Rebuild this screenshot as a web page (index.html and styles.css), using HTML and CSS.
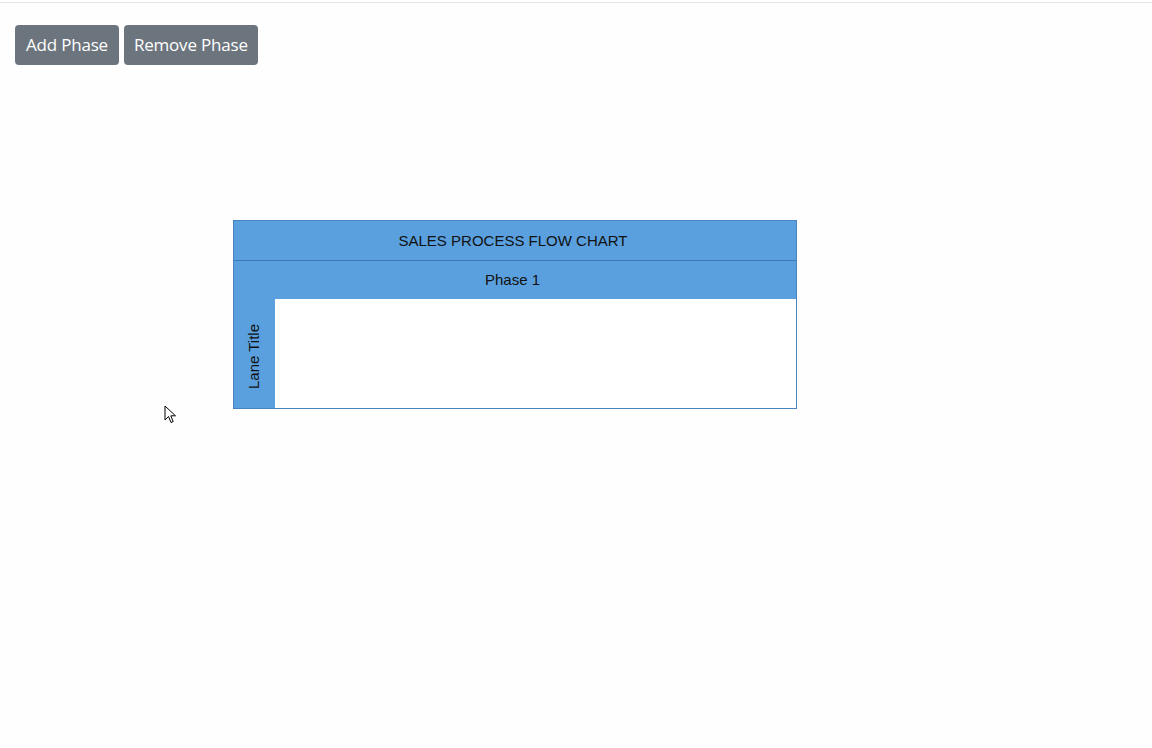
FILE: index.html
```html
<!DOCTYPE html>
<html>
<head>
<meta charset="utf-8">
<link rel="stylesheet" href="styles.css">
</head>
<body>
<div class="topline"></div>
<div class="toolbar">
  <button class="btn">Add Phase</button>
  <button class="btn">Remove Phase</button>
</div>
<div class="canvas">
  <div class="chart">
    <div class="title">SALES PROCESS FLOW CHART</div>
    <div class="phase">Phase 1</div>
    <div class="lane">
      <div class="lane-head"><span class="lane-text">Lane Title</span></div>
      <div class="lane-body"></div>
    </div>
  </div>
</div>
<svg class="cursor" width="14" height="20" viewBox="0 0 14 20">
  <path d="M1 1 L1 15 L4.5 11.5 L7 17.5 L9.2 16.6 L6.8 10.8 L11.5 10.8 Z" fill="#fff" stroke="#000" stroke-width="1" stroke-linejoin="miter"/>
</svg>
</body>
</html>
```
FILE: styles.css
```css
html, body {
  margin: 0;
  padding: 0;
  background: #fefefe;
}
body {
  position: relative;
  width: 1152px;
  height: 748px;
  overflow: hidden;
}
.topline {
  height: 2px;
  border-bottom: 1px solid #e4e4e4;
}
.toolbar {
  display: flex;
  gap: 5px;
  padding: 22px 0 0 15px;
}
.btn {
  height: 40px;
  padding: 0 10px;
  background: #6c757d;
  color: #fff;
  border: none;
  border-radius: 4px;
  font-family: "Open Sans", "Noto Sans", sans-serif;
  font-size: 17px;
  letter-spacing: -0.2px;
  line-height: 40px;
}
.btn:first-child {
  padding: 0 11px;
}
.canvas {
  padding: 155px 0 0 233px;
}
.chart {
  width: 562px;
  border: 1px solid #4a84c0;
  background: #5aa0de;
  font-family: "Liberation Sans", Arial, sans-serif;
  font-size: 15px;
  color: #111;
}
.title {
  height: 39px;
  border-bottom: 1px solid #3f79b5;
  display: flex;
  align-items: center;
  justify-content: center;
  padding-right: 4px;
}
.phase {
  height: 38px;
  display: flex;
  align-items: center;
  justify-content: center;
  padding-right: 5px;
  padding-bottom: 1px;
  box-sizing: border-box;
}
.lane {
  display: flex;
  height: 109px;
}
.lane-head {
  width: 41px;
  display: flex;
  align-items: center;
  justify-content: center;
}
.lane-text {
  display: inline-block;
  transform: rotate(-90deg);
  white-space: nowrap;
  margin-top: 6px;
  margin-right: 2px;
}
.lane-body {
  flex: 1;
  background: #fff;
}
.cursor {
  position: absolute;
  left: 164px;
  top: 405px;
}
```
